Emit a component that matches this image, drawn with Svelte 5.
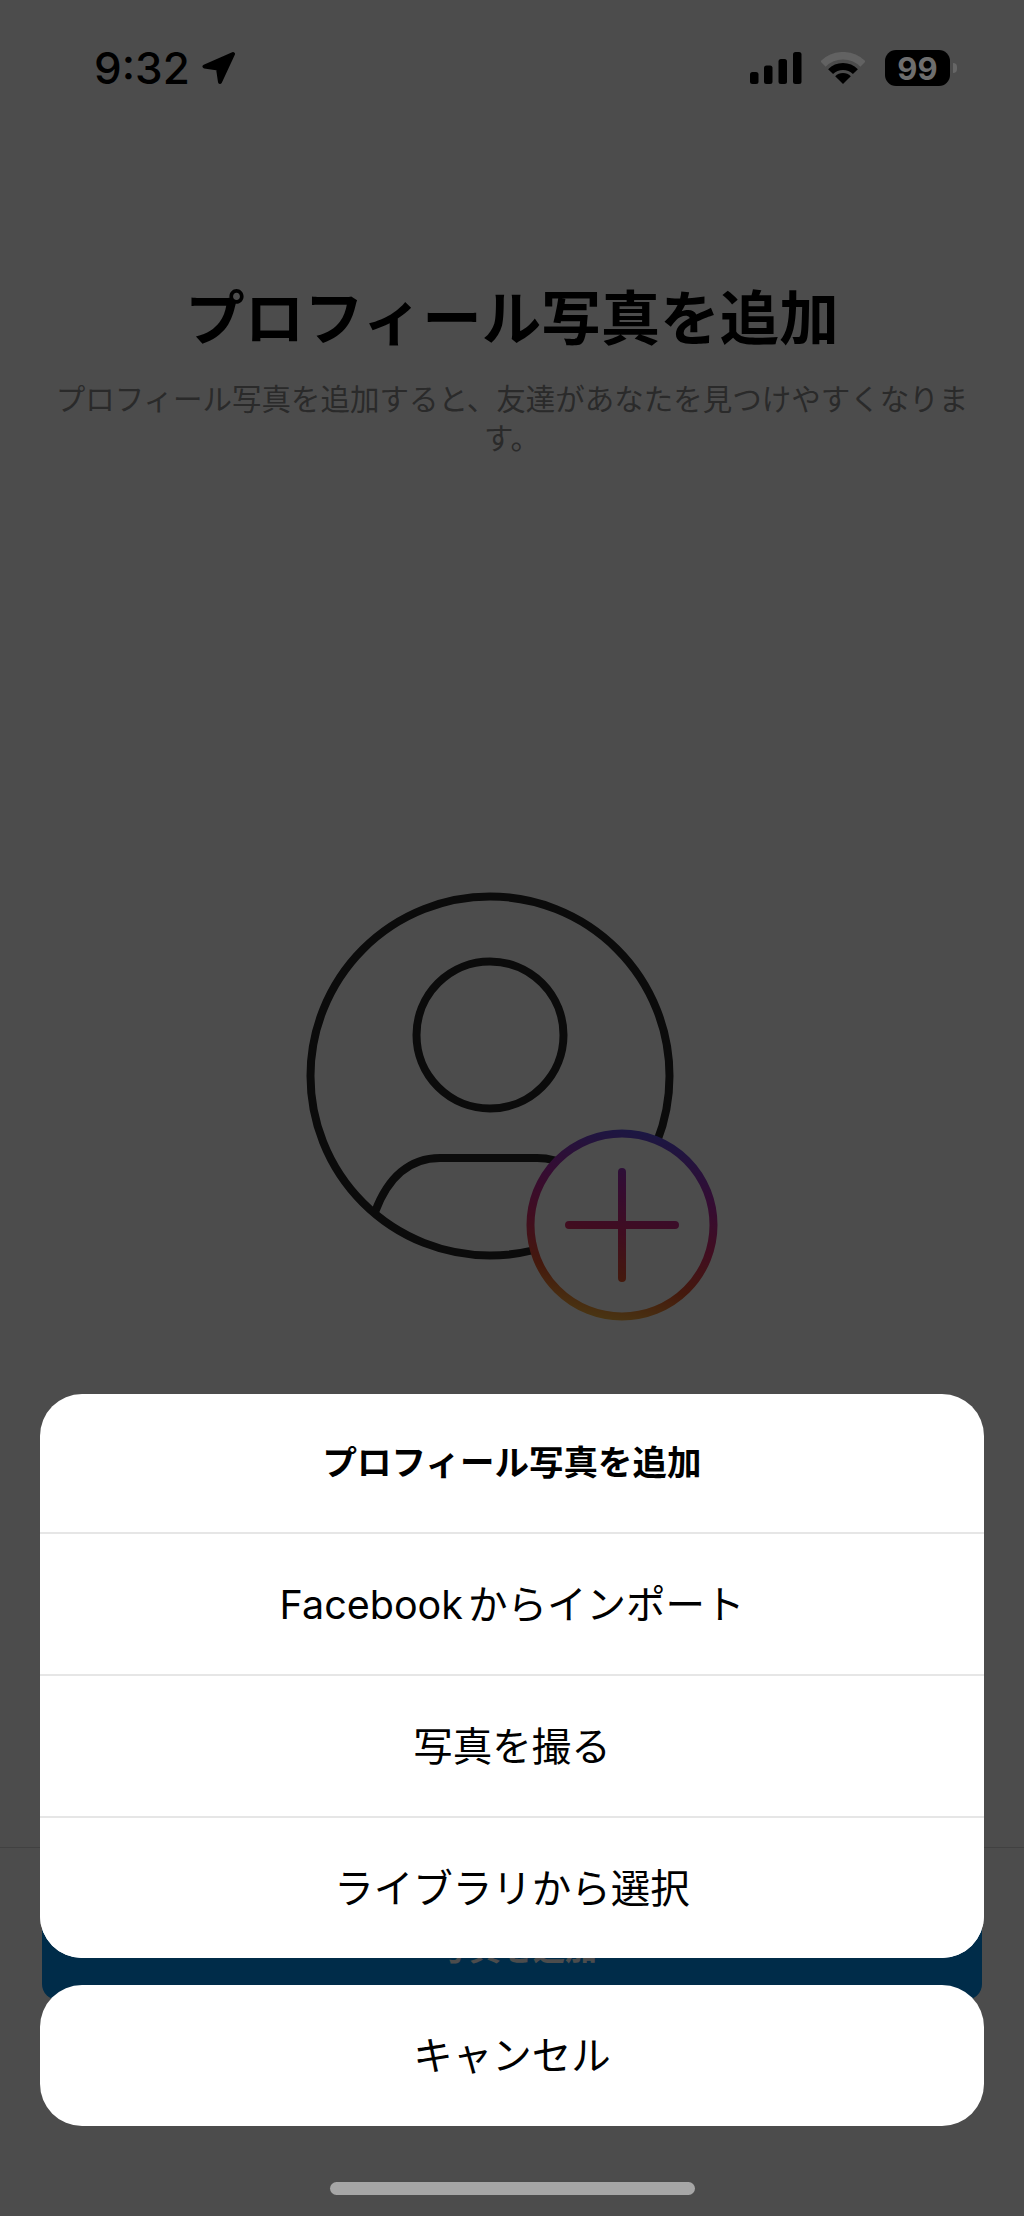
<script>
	let sheetRows = ['Facebookからインポート', '写真を撮る', 'ライブラリから選択'];
</script>

<div class="page">
	<header class="status">
		<div class="time">
			<span>9:32</span>
			<svg width="34" height="34" viewBox="0 0 34 34">
				<path d="M31 3L2.5 15.5L16 17.5L18 31Z" fill="#000" stroke="#000" stroke-width="4" stroke-linejoin="round" />
			</svg>
		</div>
		<div class="indicators">
			<svg width="52" height="32" viewBox="0 0 52 32">
				<rect x="0" y="20" width="8.5" height="12" rx="2.5" />
				<rect x="14" y="13.5" width="8.5" height="18.5" rx="2.5" />
				<rect x="28.5" y="7" width="8.5" height="25" rx="2.5" />
				<rect x="43" y="0" width="8.5" height="32" rx="2.5" />
			</svg>
			<svg class="wifi" width="44" height="32" viewBox="0 0 44 32">
				<path d="M2 12A28.25 28.25 0 0 1 42 12" fill="none" stroke="#626262" stroke-width="7.5" />
				<path d="M9.6 19.6A17.5 17.5 0 0 1 34.4 19.6" fill="none" stroke="#000" stroke-width="7" />
				<path d="M22 32L14.2 24.2A11 11 0 0 1 29.8 24.2Z" fill="#000" />
			</svg>
			<div class="battery">
				<span class="level">99</span>
				<span class="tip"></span>
			</div>
		</div>
	</header>

	<main class="intro">
		<h1>プロフィール写真を追加</h1>
		<p>プロフィール写真を追加すると、友達があなたを見つけやすくなります。</p>
		<svg class="avatar" width="424" height="440" viewBox="300 885 424 440">
			<defs>
				<linearGradient id="ig" gradientUnits="userSpaceOnUse" x1="640" y1="1131" x2="600" y2="1321">
					<stop offset="0" stop-color="#5b4fe0" />
					<stop offset="0.3" stop-color="#b02aa8" />
					<stop offset="0.55" stop-color="#d92e6c" />
					<stop offset="0.78" stop-color="#e4552c" />
					<stop offset="1" stop-color="#f7b53f" />
				</linearGradient>
			</defs>
			<g fill="none" stroke="#262626" stroke-width="8">
				<circle cx="490" cy="1077" r="179.5" />
				<circle cx="490" cy="1036" r="73.5" />
				<path d="M375 1213C388 1178 410 1159 440 1159H537C550 1159 560 1162 570 1168" />
			</g>
			<circle cx="622" cy="1226" r="91.5" fill="#fff" stroke="url(#ig)" stroke-width="8" />
			<path d="M622 1173V1279M569 1226H675" fill="none" stroke="url(#ig)" stroke-width="8" stroke-linecap="round" />
		</svg>
	</main>

	<footer class="actions">
		<button class="primary">写真を追加</button>
	</footer>

	<div class="dim">
		<div class="sheet">
			<div class="sheet-title">プロフィール写真を追加</div>
			{#each sheetRows as row}
				<button class="sheet-row">{row}</button>
			{/each}
		</div>
		<div class="sheet">
			<button class="sheet-row cancel">キャンセル</button>
		</div>
	</div>

	<div class="home"></div>
</div>

<style>
	:global(body) {
		background: #fff;
	}

	.page {
		position: relative;
		display: flex;
		flex-direction: column;
		width: 1024px;
		height: 2216px;
		overflow: hidden;
		background: #fff;
		color: #000;
		font-family: Inter, "Noto Sans CJK JP", sans-serif;
		text-autospace: normal;
	}

	/* sits above the dim, its grey bits are lighter than the dimmed page */
	.status {
		position: relative;
		z-index: 2;
		display: flex;
		justify-content: space-between;
		align-items: center;
		height: 44px;
		padding: 46px 74px 0 94px;
	}

	.time {
		display: flex;
		align-items: center;
		gap: 12px;
		font-size: 44px;
		font-weight: 500;
		line-height: 44px;
	}

	.indicators {
		display: flex;
		align-items: center;
	}

	.wifi {
		margin-left: 19px;
	}

	.battery {
		position: relative;
		display: flex;
		justify-content: center;
		align-items: center;
		width: 65px;
		height: 36px;
		margin-left: 20px;
		border-radius: 11px;
		background: #000;
		color: #6e6e6e;
		font-size: 31px;
		font-weight: 700;
	}

	.tip {
		position: absolute;
		left: 68px;
		top: 13px;
		width: 4px;
		height: 10px;
		border-radius: 0 5px 5px 0;
		background: #666;
	}

	.intro {
		display: flex;
		flex-direction: column;
		align-items: center;
		padding: 193px 44px 0;
		text-align: center;
	}

	h1 {
		margin: 0;
		font-size: 59.5px;
		font-weight: 700;
		line-height: 70px;
	}

	p {
		margin: 27px 0 0;
		color: #8e8e8e;
		font-size: 29.5px;
		line-height: 39px;
	}

	.avatar {
		flex: none;
		margin-top: 426px;
	}

	.actions {
		margin-top: auto;
		padding: 52px 42px 216px;
		border-top: 1px solid #dbdbdb;
	}

	button {
		font: inherit;
		border: none;
		padding: 0;
	}

	.primary {
		display: block;
		width: 100%;
		height: 100px;
		padding: 0 0 8px 10px;
		border-radius: 16px;
		background: #0095f6;
		color: #fff;
		font-size: 32px;
		font-weight: 600;
	}

	.dim {
		position: absolute;
		inset: 0;
		z-index: 1;
		display: flex;
		flex-direction: column;
		justify-content: flex-end;
		gap: 27px;
		padding: 0 40px 90px;
		background: rgba(0, 0, 0, 0.7);
	}

	.sheet {
		overflow: hidden;
		border-radius: 42px;
		background: #fff;
	}

	.sheet-title {
		height: 138px;
		font-size: 34.5px;
		font-weight: 700;
		line-height: 138px;
		text-align: center;
	}

	.sheet-row {
		display: block;
		width: 100%;
		height: 142px;
		padding-bottom: 6px;
		border-top: 2px solid #e6e6e6;
		background: #fff;
		color: #000;
		font-size: 39.5px;
		text-align: center;
	}

	.cancel {
		height: 141px;
		border-top: none;
	}

	.home {
		position: absolute;
		z-index: 2;
		left: 330px;
		bottom: 21px;
		width: 365px;
		height: 13px;
		border-radius: 7px;
		background: #a6a6a6;
	}
</style>
